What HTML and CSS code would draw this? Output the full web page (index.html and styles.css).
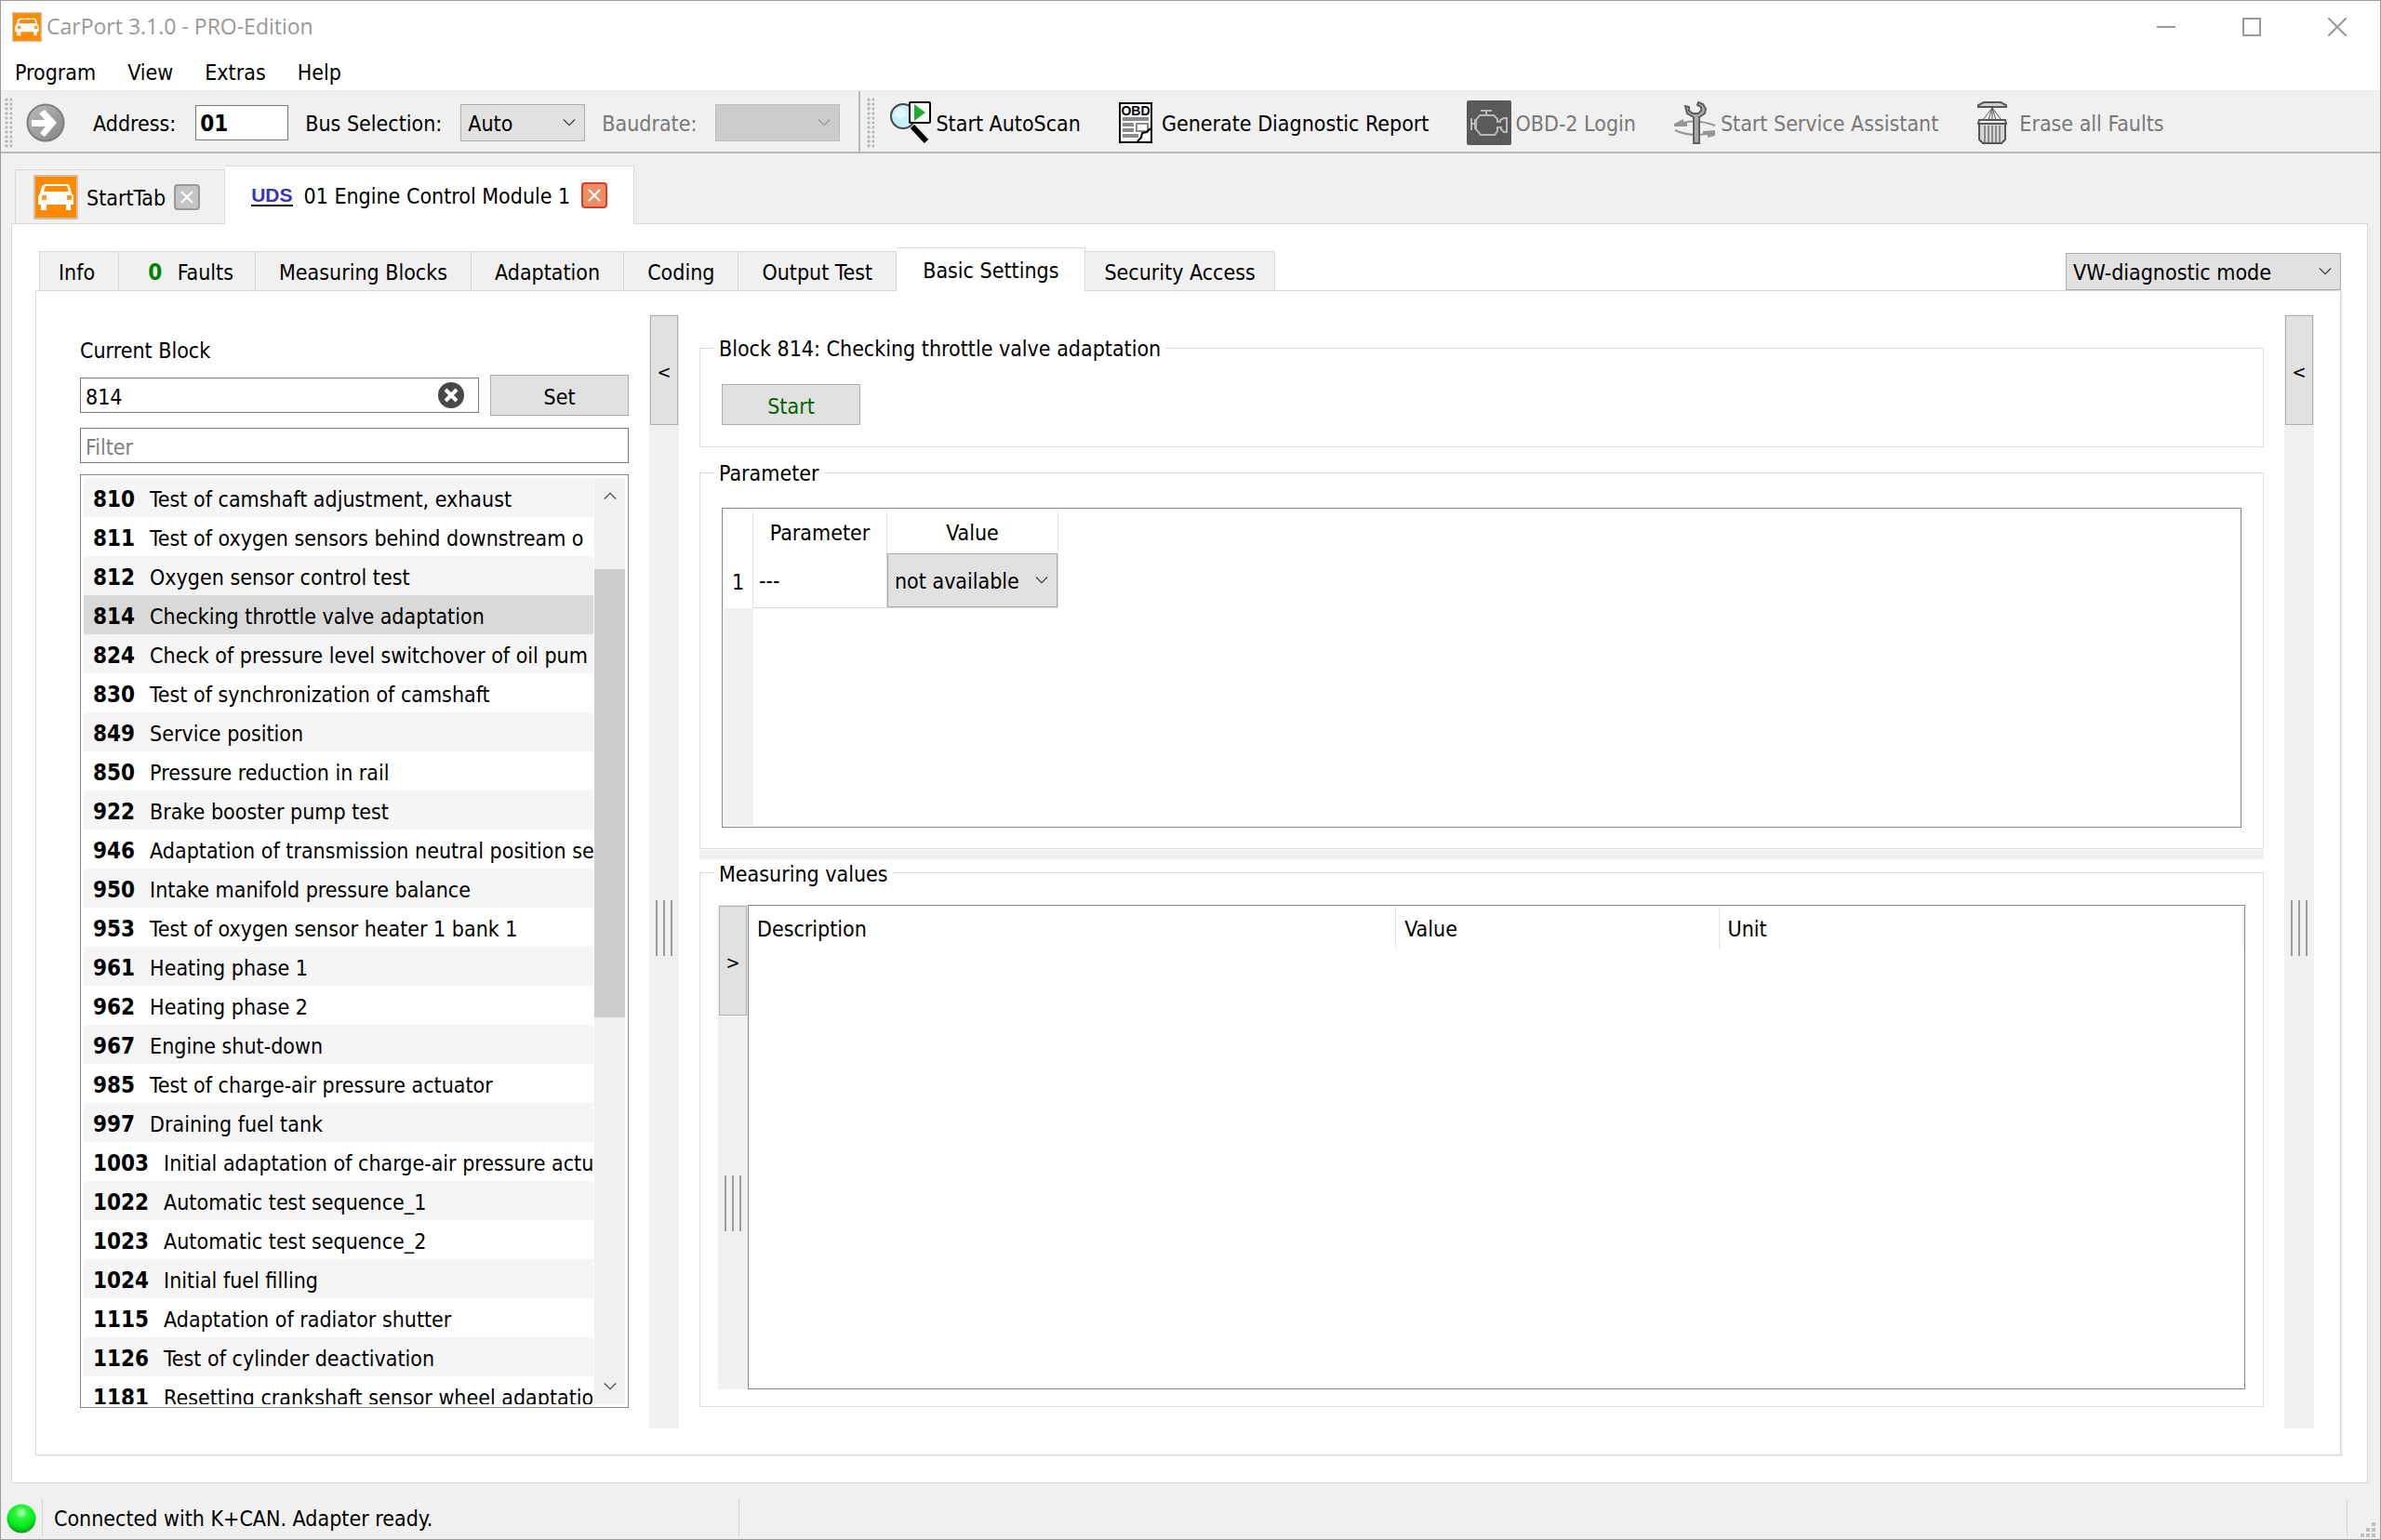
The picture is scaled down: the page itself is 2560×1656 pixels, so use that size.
FILE: index.html
```html
<!DOCTYPE html>
<html lang="en">
<head>
    <meta charset="UTF-8">
    <meta name="viewport" content="width=device-width, initial-scale=1.0">
    <title>CarPort 3.1.0 - PRO-Edition</title>
    <link rel="stylesheet" href="styles.css">
</head>
<body>
    <svg class="defs" aria-hidden="true">
        <defs>
            <symbol id="car" viewBox="0 0 48 48">
                <rect width="48" height="48" fill="#d2bfa8"/>
                <rect x="2" y="2" width="44" height="44" fill="#ff8a00"/>
                <path d="M13 10h24l2 2 2 8 2 3v9H5v-9l2-3 2-8z" fill="#fff"/>
                <path d="M13 12h23l2 6H11z" fill="#ff8a00"/>
                <path d="M9 22h5v5H9zM36 22h5v5h-5z" fill="#ff9a20"/>
                <path d="M8 31h6v7H8zM35 31h5v7h-5z" fill="#fff"/>
            </symbol>
            <symbol id="chevron" viewBox="0 0 16 10">
                <path d="M1 1l7 7 7-7" fill="none" stroke="currentColor" stroke-width="1.6"/>
            </symbol>
        </defs>
    </svg>

    <header class="titlebar">
        <svg class="app-icon"><use href="#car"/></svg>
        <h1>CarPort 3.1.0 - PRO-Edition</h1>
        <div class="window-buttons">
            <button aria-label="Minimize"><svg viewBox="0 0 20 20"><path d="M0 10h20"/></svg></button>
            <button aria-label="Maximize"><svg viewBox="0 0 20 20"><path d="M1 1h18v18H1z"/></svg></button>
            <button aria-label="Close"><svg viewBox="0 0 20 20"><path d="M0 0l20 20M20 0L0 20"/></svg></button>
        </div>
    </header>

    <nav class="menubar">
        <button>Program</button>
        <button>View</button>
        <button>Extras</button>
        <button>Help</button>
    </nav>

    <div class="toolbars">
        <div class="toolbar address-bar">
            <span class="handle"></span>
            <button class="go" aria-label="Go">
                <svg viewBox="0 0 42 42">
                    <defs>
                        <linearGradient id="goFill" x1="0" y1="0" x2="1" y2="1">
                            <stop offset="0" stop-color="#bdbdbd"/>
                            <stop offset="1" stop-color="#848484"/>
                        </linearGradient>
                    </defs>
                    <circle cx="21" cy="21" r="19.5" fill="url(#goFill)" stroke="#7d7d7d" stroke-width="2"/>
                    <path d="M6 18h14l-6-7 6-4 13 14-13 15-5-4 6-7H6z" fill="#fff"/>
                </svg>
            </button>
            <label for="address">Address:</label>
            <input id="address" class="address" type="text" value="01">
            <label for="bus">Bus Selection:</label>
            <span class="combo">
                <select id="bus"><option>Auto</option></select>
                <svg><use href="#chevron"/></svg>
            </span>
            <label for="baud" class="disabled">Baudrate:</label>
            <span class="combo">
                <select id="baud" disabled><option></option></select>
                <svg><use href="#chevron"/></svg>
            </span>
        </div>
        <div class="toolbar actions">
            <span class="handle"></span>
            <button class="scan">
                <svg width="46" height="46" viewBox="0 0 46 46">
                    <path d="M25 27l15 16" stroke="#000" stroke-width="6"/>
                    <circle cx="15" cy="16" r="13" fill="#c4effb" stroke="#444" stroke-width="2"/>
                    <circle cx="12" cy="13" r="6" fill="#e2f8ff"/>
                    <rect x="22" y="1" width="22" height="22" rx="1" fill="#fff" stroke="#000" stroke-width="2"/>
                    <path d="M27 3l12 9-12 9z" fill="#1fae2b"/>
                </svg>
                <span>Start AutoScan</span>
            </button>
            <button class="report">
                <svg width="36" height="44" viewBox="0 0 36 44">
                    <rect x="1" y="1" width="34" height="42" fill="#fff" stroke="#000" stroke-width="2"/>
                    <text x="18" y="14" text-anchor="middle">OBD</text>
                    <path d="M4 18h28M4 24h12M4 30h12M4 36h17" stroke="#8a8a8a" stroke-width="4"/>
                    <path d="M19 23h12v8H19z" fill="#fff" stroke="#8a8a8a" stroke-width="2"/>
                    <path d="M34 29l-9 4-1 5-4 4h14z" fill="#fff"/>
                    <path d="M34 28l-4 4-5 1-1 5-4 4" fill="none" stroke="#000" stroke-width="2"/>
                </svg>
                <span>Generate Diagnostic Report</span>
            </button>
            <button class="obd" disabled>
                <svg width="48" height="48" viewBox="0 0 48 48">
                    <rect width="48" height="48" rx="2" fill="#5a5a5a"/>
                    <g fill="none" stroke="#b9b9b9" stroke-width="2">
                        <path d="M15 11h12M21 12v4M5 19v13M5 25h4M9 20v11"/>
                        <path d="M10 21l4-5h15l4 4v3h3v-2l4-2h3v15h-3l-3-3v-2h-4v4l-3 4H15l-5-6z"/>
                    </g>
                </svg>
                <span>OBD-2 Login</span>
            </button>
            <button class="service" disabled>
                <svg width="46" height="46" viewBox="0 0 46 46">
                    <g fill="none" stroke="#969696" stroke-width="2">
                        <path d="M10 23q15-4 34 3M1 31q14 7 34 4"/>
                    </g>
                    <path d="M0 24l10-5v3h4v5H0zM44 31v6l-8 2v-3h-5v-4z" fill="#969696"/>
                    <path d="M21 45V17l-7-4-2-8 4 1v4l4 3h6l3-3V6l-4-2 1-3 5 2 3 5-1 5-6 4v28z" fill="#a8a8a8" stroke="#5f5f5f" stroke-width="2"/>
                </svg>
                <span>Start Service Assistant</span>
            </button>
            <button class="erase" disabled>
                <svg width="34" height="46" viewBox="0 0 34 46">
                    <path d="M8 1h18l6 3v2H2V4z" fill="#d0d0d0" stroke="#565656" stroke-width="2"/>
                    <path d="M17 7L7 20M17 7l-4 13M17 7l4 13M17 7l10 13M17 7v13" fill="none" stroke="#565656"/>
                    <path d="M3 24v17l4 4h20l4-4V24z" fill="#d6d6d6" stroke="#565656" stroke-width="2"/>
                    <path d="M9 26v18M13 26v18M17 26v18M21 26v18M25 26v18" stroke="#8c8c8c" stroke-width="2"/>
                    <path d="M3 20h28l1 4H2z" fill="#eee" stroke="#565656" stroke-width="2"/>
                </svg>
                <span>Erase all Faults</span>
            </button>
        </div>
    </div>

    <main class="workspace">
        <div class="tabs doc-tabs">
            <div class="tab">
                <svg class="tab-icon"><use href="#car"/></svg>
                <span>StartTab</span>
                <button class="close" aria-label="Close StartTab"><svg viewBox="0 0 14 14"><path d="M1 1l12 12M13 1L1 13"/></svg></button>
            </div>
            <div class="tab active">
                <span class="uds">UDS</span>
                <span>01 Engine Control Module 1</span>
                <button class="close red" aria-label="Close module"><svg viewBox="0 0 14 14"><path d="M1 1l12 12M13 1L1 13"/></svg></button>
            </div>
        </div>

        <section class="doc-pane">
            <div class="function-row">
                <div class="tabs function-tabs">
                    <button class="tab info">Info</button>
                    <button class="tab faults"><b>0</b> Faults</button>
                    <button class="tab">Measuring Blocks</button>
                    <button class="tab">Adaptation</button>
                    <button class="tab">Coding</button>
                    <button class="tab">Output Test</button>
                    <button class="tab active">Basic Settings</button>
                    <button class="tab access">Security Access</button>
                </div>
                <span class="combo mode">
                    <select aria-label="Diagnostic mode"><option>VW-diagnostic mode</option></select>
                    <svg><use href="#chevron"/></svg>
                </span>
            </div>

            <div class="function-pane">
                <aside class="block-panel">
                    <label for="block">Current Block</label>
                    <div class="block-row">
                        <div class="block-input">
                            <input id="block" type="text" value="814">
                            <button class="clear" aria-label="Clear">
                                <svg viewBox="0 0 28 28"><circle cx="14" cy="14" r="14" fill="#484848"/><path d="M8 8l12 12M20 8L8 20" stroke="#fff" stroke-width="4"/></svg>
                            </button>
                        </div>
                        <button class="push">Set</button>
                    </div>
                    <input class="filter" type="text" placeholder="Filter" aria-label="Filter">
                    <div class="block-list">
                        <ul>
                            <li><b>810</b>Test of camshaft adjustment, exhaust</li>
                            <li><b>811</b>Test of oxygen sensors behind downstream o</li>
                            <li><b>812</b>Oxygen sensor control test</li>
                            <li class="selected"><b>814</b>Checking throttle valve adaptation</li>
                            <li><b>824</b>Check of pressure level switchover of oil pum</li>
                            <li><b>830</b>Test of synchronization of camshaft</li>
                            <li><b>849</b>Service position</li>
                            <li><b>850</b>Pressure reduction in rail</li>
                            <li><b>922</b>Brake booster pump test</li>
                            <li><b>946</b>Adaptation of transmission neutral position se</li>
                            <li><b>950</b>Intake manifold pressure balance</li>
                            <li><b>953</b>Test of oxygen sensor heater 1 bank 1</li>
                            <li><b>961</b>Heating phase 1</li>
                            <li><b>962</b>Heating phase 2</li>
                            <li><b>967</b>Engine shut-down</li>
                            <li><b>985</b>Test of charge-air pressure actuator</li>
                            <li><b>997</b>Draining fuel tank</li>
                            <li><b>1003</b>Initial adaptation of charge-air pressure actu</li>
                            <li><b>1022</b>Automatic test sequence_1</li>
                            <li><b>1023</b>Automatic test sequence_2</li>
                            <li><b>1024</b>Initial fuel filling</li>
                            <li><b>1115</b>Adaptation of radiator shutter</li>
                            <li><b>1126</b>Test of cylinder deactivation</li>
                            <li><b>1181</b>Resetting crankshaft sensor wheel adaptatio</li>
                        </ul>
                        <div class="scrollbar">
                            <button class="up" aria-label="Scroll up"><svg><use href="#chevron"/></svg></button>
                            <div class="track"><div class="thumb"></div></div>
                            <button aria-label="Scroll down"><svg><use href="#chevron"/></svg></button>
                        </div>
                    </div>
                </aside>

                <div class="splitter">
                    <button>&lt;</button>
                    <div class="grip"></div>
                </div>

                <div class="details">
                    <fieldset class="block-box">
                        <legend>Block 814: Checking throttle valve adaptation</legend>
                        <button class="push start">Start</button>
                    </fieldset>

                    <fieldset class="parameter-box">
                        <legend>Parameter</legend>
                        <div class="frame">
                            <table class="parameters">
                                <tr><th class="num"></th><th class="name">Parameter</th><th class="value">Value</th></tr>
                                <tr>
                                    <th class="num">1</th>
                                    <td class="name">---</td>
                                    <td class="value">
                                        <span class="combo">
                                            <select aria-label="Value"><option>not available</option></select>
                                            <svg><use href="#chevron"/></svg>
                                        </span>
                                    </td>
                                </tr>
                            </table>
                            <div class="header-rest"></div>
                        </div>
                    </fieldset>

                    <div class="h-splitter"></div>

                    <fieldset class="values-box">
                        <legend>Measuring values</legend>
                        <div class="values">
                            <div class="splitter">
                                <button>&gt;</button>
                                <div class="grip"></div>
                            </div>
                            <div class="frame">
                                <table class="measuring">
                                    <tr><th class="description">Description</th><th class="amount">Value</th><th>Unit</th></tr>
                                </table>
                            </div>
                        </div>
                    </fieldset>
                </div>

                <div class="splitter">
                    <button>&lt;</button>
                    <div class="grip"></div>
                </div>
            </div>
        </section>
    </main>

    <footer class="statusbar">
        <svg class="led" viewBox="0 0 32 32">
            <defs>
                <radialGradient id="ledFill" cx="0.5" cy="0.3" r="0.7">
                    <stop offset="0" stop-color="#c8ffc8"/>
                    <stop offset="0.3" stop-color="#2cf53a"/>
                    <stop offset="0.65" stop-color="#06ee1c"/>
                    <stop offset="1" stop-color="#129a1e"/>
                </radialGradient>
            </defs>
            <circle cx="16" cy="16" r="15.5" fill="url(#ledFill)"/>
        </svg>
        <div class="status-text">Connected with K+CAN. Adapter ready.</div>
        <div class="status-rest"></div>
        <svg class="size-grip" viewBox="0 0 16 16">
            <path d="M12 0h4v4h-4zM6 6h4v4H6zM12 6h4v4h-4zM0 12h4v4H0zM6 12h4v4H6zM12 12h4v4h-4z" fill="#bfbfbf"/>
        </svg>
    </footer>
</body>
</html>
```
FILE: styles.css
```css
* {
    box-sizing: border-box;
}
body {
    margin: 0;
    height: 100vh;
    display: flex;
    flex-direction: column;
    overflow: hidden;
    border: 1px solid #9b9ba0;
    background: #f0f0f0;
    color: #000;
    font: 23px/28px "DejaVu Sans Condensed", "DejaVu Sans", sans-serif;
}
button, input, select {
    font: inherit;
    color: inherit;
    margin: 0;
    border-radius: 0;
}
button {
    border: none;
    background: none;
    padding: 0;
}
svg {
    display: block;
    flex: none;
}
b {
    font-size: 24px;
}
.defs {
    position: absolute;
    width: 0;
    height: 0;
}

/* title and menu */
.titlebar {
    display: flex;
    align-items: center;
    height: 56px;
    padding-left: 12px;
    background: #fff;
}
.app-icon {
    width: 32px;
    height: 32px;
}
h1 {
    flex: 1;
    margin: 0 0 0 5px;
    padding-bottom: 2px;
    color: #999;
    font: 23px/28px "Open Sans", sans-serif;
}
.window-buttons {
    display: flex;
}
.window-buttons button {
    width: 92px;
    height: 52px;
    display: flex;
    align-items: center;
    justify-content: center;
}
.window-buttons svg {
    width: 20px;
    height: 20px;
    fill: none;
    stroke: #999;
    stroke-width: 2;
}
.menubar {
    display: flex;
    gap: 34px;
    height: 41px;
    padding: 1px 15px 0;
    background: #fff;
    border-bottom: 1px solid #ececec;
}

/* toolbars */
.toolbars {
    display: flex;
    height: 67px;
    border-bottom: 2px solid #b8b8b8;
}
.toolbar {
    display: flex;
    align-items: center;
    padding-top: 2px;
}
.toolbar label, .toolbar button span {
    padding-top: 2px;
}
.handle {
    width: 8px;
    height: 54px;
    background: radial-gradient(circle at 2px 2px, #b4b4b4 1px, transparent 2px) 0 0 / 5px 5px;
}
.address-bar {
    padding-left: 4px;
    padding-right: 20px;
    border-right: 2px solid #b8b8b8;
}
.go {
    margin: 0 30px 0 15px;
}
.go svg {
    width: 42px;
    height: 42px;
}
.address {
    width: 100px;
    height: 38px;
    margin: 0 18px 0 21px;
    padding: 2px 4px 0;
    border: 1px solid #7a7a7a;
    background: #fff;
    font-weight: bold;
    font-size: 24px;
}
.combo {
    display: grid;
    align-items: center;
    width: 134px;
    height: 40px;
}
.combo select, .combo svg {
    grid-area: 1 / 1;
}
.combo select {
    appearance: none;
    width: 100%;
    height: 100%;
    padding: 2px 7px 0;
    border: 1px solid #adadad;
    background: #e1e1e1;
    color: #000;
}
.combo select:disabled {
    background: #cccccc;
    border-color: #bfbfbf;
    opacity: 1;
}
.combo select:disabled + svg {
    color: #999;
}
.combo svg {
    justify-self: end;
    width: 14px;
    height: 10px;
    margin-right: 10px;
    color: #444;
    pointer-events: none;
}
.address-bar .combo {
    margin-left: 20px;
}
.disabled, button:disabled {
    color: #787878;
}
.address-bar .disabled {
    margin-left: 18px;
}
.actions {
    padding-left: 7px;
}
.actions button {
    display: flex;
    align-items: center;
    gap: 4px;
    margin-right: 41px;
}
.actions .scan {
    margin-left: 16px;
}
.actions .report {
    gap: 10px;
}
.actions .erase {
    gap: 12px;
}
.report text {
    font: bold 14px "Liberation Sans", sans-serif;
}

/* tabs */
.tabs {
    display: flex;
    align-items: flex-end;
}
.tab {
    display: flex;
    align-items: center;
    border: 1px solid #d9d9d9;
    border-bottom: none;
    border-left: none;
    background: #f0f0f0;
}
.tab:first-child {
    border-left: 1px solid #d9d9d9;
}
.tab.active {
    position: relative;
    margin-bottom: -1px;
    background: #fff;
}
.workspace {
    flex: 1;
    min-height: 0;
    display: flex;
    flex-direction: column;
    padding: 13px 13px 0 11px;
}
.doc-tabs {
    padding-left: 4px;
}
.doc-tabs .tab {
    height: 58px;
    gap: 9px;
    padding: 0 26px 0 19px;
}
.doc-tabs .tab.active {
    height: 63px;
    gap: 12px;
    padding: 0 28px;
}
.doc-tabs .tab span {
    padding-top: 2px;
}
.tab-icon {
    width: 48px;
    height: 48px;
}
.close {
    width: 28px;
    height: 28px;
    display: flex;
    align-items: center;
    justify-content: center;
    border: 2px solid #9a9a9a;
    border-radius: 4px;
    background: #c4c4c4;
}
.close.red {
    border-color: #dd3a2a;
    background: #e98f62;
}
.close svg {
    width: 14px;
    height: 14px;
    stroke: #fff;
    stroke-width: 2;
}
.uds {
    border-bottom: 2px solid #000;
    color: #3535bd;
    font: bold 21px/20px "Liberation Sans", sans-serif;
}
.doc-pane {
    flex: 1;
    min-height: 0;
    display: flex;
    flex-direction: column;
    padding: 25px 28px 29px 25px;
    border: 1px solid #d9d9d9;
    background: #fff;
}
.function-row {
    display: flex;
    align-items: flex-end;
    justify-content: space-between;
    padding-left: 4px;
}
.function-tabs .tab {
    height: 42px;
    padding: 3px 25px 0;
    white-space: pre;
}
.function-tabs .info {
    padding-left: 20px;
}
.function-tabs .faults {
    padding-left: 31px;
    padding-right: 23px;
}
.faults b {
    margin-right: 10px;
    color: #008000;
}
.function-tabs .tab.active {
    height: 47px;
    padding: 2px 28px 0;
}
.function-tabs .access {
    padding-left: 20px;
    padding-right: 20px;
}
.mode {
    width: 296px;
}
.function-pane {
    flex: 1;
    min-height: 0;
    display: flex;
    gap: 22px;
    padding: 25px 28px 28px 47px;
    border: 1px solid #d9d9d9;
    box-shadow: 2px 1px 0 #f0f0f0;
}

/* left panel */
.block-panel {
    display: flex;
    flex-direction: column;
    width: 590px;
    padding: 25px 0 22px;
}
.block-row {
    display: flex;
    align-items: center;
    gap: 12px;
    margin: 12px 0 13px;
}
.block-input {
    flex: 1;
    display: flex;
    align-items: center;
    height: 38px;
    padding-right: 15px;
    border: 1px solid #7a7a7a;
}
.block-input input {
    flex: 1;
    min-width: 0;
    border: none;
    padding: 4px 5px 0;
}
.clear svg {
    width: 28px;
    height: 28px;
}
.push {
    width: 149px;
    height: 44px;
    padding-top: 4px;
    border: 1px solid #adadad;
    background: #e1e1e1;
}
.filter {
    height: 38px;
    padding: 4px 5px 0;
    border: 1px solid #7a7a7a;
}
.filter::placeholder {
    color: #808080;
}
.block-list {
    flex: 1;
    min-height: 0;
    display: flex;
    margin-top: 12px;
    padding: 3px;
    border: 1px solid #828790;
}
.block-list ul {
    flex: 1;
    min-width: 0;
    margin: 0;
    padding: 0;
    overflow: hidden;
    list-style: none;
}
.block-list li {
    height: 42px;
    padding: 2px 0 0 10px;
    line-height: 42px;
    white-space: nowrap;
}
.block-list li:nth-child(odd) {
    background: #f5f5f5;
}
.block-list li.selected {
    background: #d9d9d9;
}
.block-list b {
    margin-right: 16px;
}
.scrollbar {
    display: flex;
    flex-direction: column;
    width: 34px;
    border-left: 1px solid #fff;
    background: #f0f0f0;
}
.scrollbar button {
    height: 38px;
    display: flex;
    align-items: center;
    justify-content: center;
    color: #505050;
}
.scrollbar svg {
    width: 14px;
    height: 10px;
    stroke: currentColor;
}
.scrollbar .up svg {
    transform: rotate(180deg);
}
.track {
    flex: 1;
    padding-top: 60px;
}
.thumb {
    height: 56%;
    background: #cdcdcd;
}

/* splitters */
.splitter {
    flex: none;
    display: grid;
    width: 32px;
    padding: 1px;
    background: #f0f0f0;
}
.splitter button, .grip {
    grid-area: 1 / 1;
}
.splitter button {
    height: 118px;
    padding-top: 4px;
    border: 1px solid #adadad;
    background: #e1e1e1;
    font-size: 20px;
}
.grip {
    place-self: center;
    width: 18px;
    height: 60px;
    margin-top: 122px;
    border: solid #9d9da0;
    border-width: 0 2px;
    background: linear-gradient(#9d9da0, #9d9da0) center / 2px 100% no-repeat;
}
.h-splitter {
    height: 10px;
    margin-top: 1px;
    background: #f0f0f0;
}

/* right side */
.details {
    flex: 1;
    min-width: 0;
    display: flex;
    flex-direction: column;
    padding: 21px 0 23px;
}
fieldset {
    margin: 0;
    min-width: 0;
    border: 1px solid #dcdcdc;
}
legend {
    padding: 2px 5px 0;
}
.block-box {
    padding: 24px 15px 23px;
    margin-bottom: 12px;
}
.start {
    margin-left: 8px;
    color: #006400;
}
.parameter-box {
    flex: 21;
    padding: 23px 15px 22px;
}
.parameter-box .frame {
    height: 100%;
    margin: 0 8px;
    padding: 1px;
    display: flex;
    flex-direction: column;
}
.frame {
    border: 1px solid #828790;
}
table {
    border-collapse: separate;
    border-spacing: 0;
}
th, td {
    padding: 0;
    font-weight: normal;
}
.parameters {
    table-layout: fixed;
    width: 360px;
}
.parameters th {
    height: 47px;
    padding-top: 3px;
    border-right: 1px solid #e5e5e5;
}
.parameters .num {
    width: 32px;
}
.parameters .name {
    width: 144px;
}
.parameters td {
    height: 59px;
    border: solid #d8d8d8;
    border-width: 0 1px 1px 0;
}
.parameters td.name {
    padding-left: 6px;
}
.parameters .combo {
    width: 100%;
    height: 58px;
}
.header-rest {
    flex: 1;
    width: 32px;
    background: #f0f0f0;
}
.values-box {
    flex: 31;
    padding: 19px 19px 18px;
}
.values {
    display: flex;
    height: 100%;
}
.values .frame {
    flex: 1;
    padding: 1px 0;
}
.values-box legend {
    margin-left: -4px;
}
.measuring {
    table-layout: fixed;
    width: 100%;
}
.measuring th {
    height: 45px;
    padding: 4px 0 0 9px;
    border-right: 1px solid #e5e5e5;
    text-align: left;
}
.description {
    width: 43.3%;
}
.amount {
    width: 21.6%;
}

/* status bar */
.statusbar {
    display: flex;
    align-items: center;
    height: 60px;
    padding: 17px 5px 2px 6px;
}
.led {
    width: 32px;
    height: 32px;
}
.status-text {
    width: 750px;
    height: 41px;
    margin-left: 6px;
    padding-left: 12px;
    border: solid #d7d7d7;
    border-width: 0 1px;
    line-height: 43px;
}
.status-rest {
    flex: 1;
    height: 41px;
    border-right: 1px solid #d7d7d7;
}
.size-grip {
    align-self: flex-end;
    width: 16px;
    height: 16px;
    margin-left: 14px;
}
```
